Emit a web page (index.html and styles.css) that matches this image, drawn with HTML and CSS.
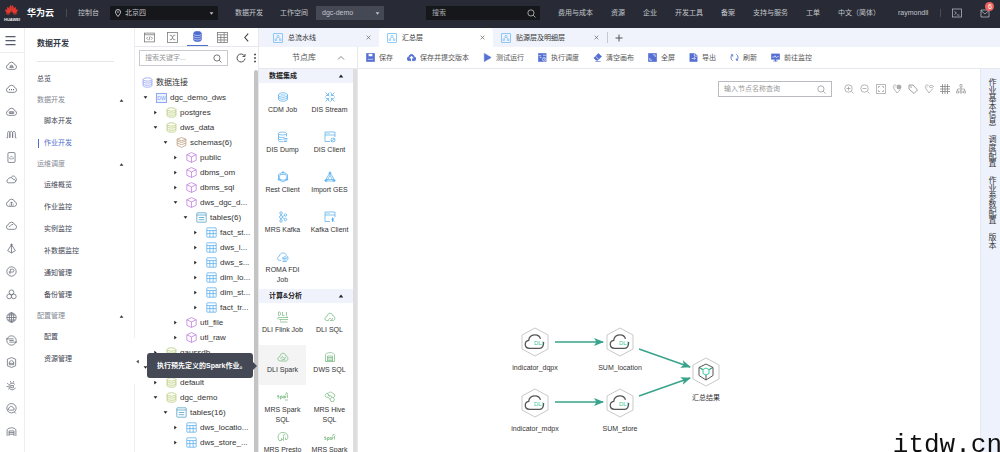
FILE: index.html
```html
<!DOCTYPE html>
<html lang="zh-CN">
<head>
<meta charset="utf-8">
<title>数据开发</title>
<link rel="stylesheet" href="styles.css">
</head>
<body>
<svg class="sprite" aria-hidden="true">
  <symbol id="down" viewBox="0 0 8 8"><path d="M1 2h6L4 6z" fill="currentColor" stroke="none"/></symbol>
  <symbol id="up" viewBox="0 0 8 8"><path d="M1 6h6L4 2z" fill="currentColor" stroke="none"/></symbol>
  <symbol id="right" viewBox="0 0 8 8"><path d="M2 1v6l4-3z" fill="currentColor" stroke="none"/></symbol>
  <symbol id="search" viewBox="0 0 16 16"><circle cx="7" cy="7" r="5.5"/><path d="M11 11l4 4"/></symbol>
  <symbol id="close" viewBox="0 0 8 8"><path d="M1 1l6 6M7 1L1 7"/></symbol>
  <symbol id="cloud" viewBox="0 0 20 20"><path d="M5 17a4.300 4.300 0 0 1-.8-8.500A6 6 0 0 1 15.800 8.500a4.300 4.300 0 0 1-.8 8.500z"/></symbol>
  <symbol id="cloud-in" viewBox="0 0 20 20"><use href="#cloud"/><path d="M6 13.500h8M7 11.500l3-2 3 2z"/></symbol>
  <symbol id="cloud-dots" viewBox="0 0 20 20"><use href="#cloud"/><path d="M5.500 12h1.800M9.100 12h1.800M12.700 12h1.800" stroke-width="2"/></symbol>
  <symbol id="cloud-bars" viewBox="0 0 20 20"><use href="#cloud"/><path d="M6 10.500h8v3H6zM8.700 10.500v3M11.400 10.500v3"/></symbol>
  <symbol id="waves" viewBox="0 0 20 20"><path d="M1 16h2V8c0-5 4-5 4 0v8V8c0-5 5-5 5 0v8V8c0-5 5-5 5 0v8h2"/></symbol>
  <symbol id="doc" viewBox="0 0 20 20"><rect x="3.500" y="1" width="13" height="18" rx="2"/><path d="M7 12.500a2 2 0 0 1 .5-3c1-2 4-2 5 0a2 2 0 0 1 .5 3z" stroke-width="1"/></symbol>
  <symbol id="cloud-two" viewBox="0 0 20 20"><path d="M4 16a3.400 3.400 0 0 1 0-6.500A5 5 0 0 1 13.400 10a3 3 0 0 1 1.600 6zM10 5c3-3 8-.5 8 3 2 1.500 1 4-.5 5"/></symbol>
  <symbol id="cloud-up" viewBox="0 0 20 20"><use href="#cloud"/><path d="M10 16V9M7.500 11.500L10 9l2.500 2.500M7 13.500v2M13 13.500v2"/></symbol>
  <symbol id="cloud-line" viewBox="0 0 20 20"><use href="#cloud"/><path d="M5 12c3 1 4-5 8-4"/></symbol>
  <symbol id="boat" viewBox="0 0 20 20"><path d="M10 1v17M10 3L3 14l7 4 7-4zM8 3h4"/></symbol>
  <symbol id="circle-p" viewBox="0 0 20 20"><circle cx="10" cy="10" r="8.500"/><path d="M7 15l1-9h4a2.500 2.500 0 0 1 0 5H8M5 11h3"/></symbol>
  <symbol id="trefoil" viewBox="0 0 20 20"><circle cx="10" cy="6" r="4.300"/><circle cx="5.800" cy="13.500" r="4.300"/><circle cx="14.200" cy="13.500" r="4.300"/></symbol>
  <symbol id="globe" viewBox="0 0 20 20"><circle cx="10" cy="10" r="8.500"/><ellipse cx="10" cy="10" rx="4" ry="8.500"/><path d="M1.500 10h17M3 5.500h14M3 14.500h14M10 1.500v17"/></symbol>
  <symbol id="circle-lines" viewBox="0 0 20 20"><circle cx="10" cy="10" r="8.500"/><path d="M0 7h14M6 10h8M6 13h14"/></symbol>
  <symbol id="hexdoc" viewBox="0 0 20 20"><path d="M10 1l7.500 3v12L10 19l-7.500-3V4zM6 14V9l4-3 4 3v5zM6 11.500h8"/></symbol>
  <symbol id="gear" viewBox="0 0 20 20"><path d="M16 8a6 6 0 1 0 1 6M8.500 10h5v4h-5zM8 2l1 3M2 6l3 2M1 12h3M14 2l-1 3M4 17l2-2"/></symbol>
  <symbol id="circle-cloud" viewBox="0 0 20 20"><circle cx="10" cy="9.500" r="8.500"/><path d="M6 13a2 2 0 0 1 0-4c1-4 6-4 7 0a2 2 0 0 1 0 4zM15 16l3 3"/></symbol>
  <symbol id="house" viewBox="0 0 20 20"><path d="M2 18V7c3-5 13-5 16 0v11M5.500 18V9h9v9M5.500 12h9M5.500 15h9"/></symbol>
  <symbol id="db" viewBox="0 0 20 20"><ellipse cx="10" cy="4.500" rx="8" ry="3"/><path d="M2 4.500v11c0 4 16 4 16 0v-11M2 8c0 4 16 4 16 0M2 12c0 4 16 4 16 0"/></symbol>
  <symbol id="dbfill" viewBox="0 0 20 20"><path d="M3 4c0-4 14-4 14 0v12c0 4-14 4-14 0z" fill="currentColor"/><path d="M3 6c2 3 12 3 14 0M3 10c2 3 12 3 14 0M3 14c2 3 12 3 14 0" stroke="#fff" stroke-width="1"/></symbol>
  <symbol id="cube" viewBox="0 0 20 20"><path d="M10 1l8.500 4v10L10 19l-8.500-4V5zM1.500 5L10 9l8.500-4M10 9v10"/></symbol>
  <symbol id="layers" viewBox="0 0 20 20"><path d="M10 1l8 3v3l-8 3-8-3V4zM2 4l8 3 8-3M2 7v4l8 3 8-3V7M2 11v4l8 4 8-4v-4"/></symbol>
  <symbol id="list" viewBox="0 0 20 20"><rect x="1.500" y="1.500" width="17" height="17" rx="1"/><path d="M1.500 5.500h17M5 10h10M5 14h10"/></symbol>
  <symbol id="grid" viewBox="0 0 20 20"><rect x="1.500" y="1.500" width="17" height="17" rx="1"/><path d="M1.500 6.500h17M1.500 12h17M7 6.500v12M13 6.500v12"/></symbol>
  <symbol id="code" viewBox="0 0 20 20"><rect x="1" y="2" width="18" height="16"/><path d="M1 5h18M7 9l-2.500 2.500L7 14M13 9l2.500 2.500L13 14M11 8l-2 7"/></symbol>
  <symbol id="flow" viewBox="0 0 20 20"><rect x="1" y="1" width="18" height="18"/><path d="M5 6h3l4 8h3M5 14h3l4-8h3"/></symbol>
  <symbol id="tabicon" viewBox="0 0 20 20"><rect x="1" y="1" width="18" height="18" rx="1"/><path d="M8 5h4v4H8zM4 12h3v3H4zM13 12h3v3h-3zM8 9l-2.500 3M12 9l2.500 3" stroke-width="1"/></symbol>
  <symbol id="dli" viewBox="0 0 28 20"><path d="M25 10c0 5-1 8-5 8H7c-7 0-7-9-1-10C7-1 19-1 21 6" stroke="#555" stroke-width="1.600"/></symbol>
</svg>

<header class="top">
  <a class="logo" href="#" aria-label="HUAWEI">
    <svg viewBox="0 0 32 32"><g fill="#e8392f" stroke="none"><path d="M15.500 19C9 13 10 5 15 2c1 4 1 11 .5 17zM16.500 19C23 13 22 5 17 2c-1 4-1 11-.5 17z"/><path d="M14 20C7 18 4 12 7 6c4 3 7 8 7 14zM18 20c7-2 10-8 7-14-4 3-7 8-7 14z"/><path d="M13 21.500C6 22 1 18 2 12c5 1 9 4 11 9.500zM19 21.500c7 .5 12-3.500 11-9.500-5 1-9 4-11 9.500z"/><path d="M12.500 23c-4 2.500-8 1-9.500-1.500 3-.5 6 0 9.500 1.500zM19.500 23c4 2.500 8 1 9.500-1.500-3-.5-6 0-9.500 1.500z"/></g></svg>
    <span>HUAWEI</span>
  </a>
  <b class="brand">华为云</b><i class="bar"></i>
  <a class="console" href="#">控制台</a>
  <label class="pick region"><svg class="i8" viewBox="0 0 16 16"><path d="M8 15C4 10 3 8.500 3 6a5 5 0 0 1 10 0c0 2.500-1 4-5 9z" stroke-width="2"/><circle cx="8" cy="6" r="1"/></svg><select aria-label="区域"><option>北京四</option></select><svg class="i5"><use href="#down"/></svg></label>
  <span class="crumb">数据开发</span><label class="crumb" for="space">工作空间</label>
  <div class="pick space"><select id="space"><option>dgc-demo</option></select><svg class="i5"><use href="#down"/></svg></div>
  <label class="pick find"><input type="text" placeholder="搜索" aria-label="搜索"><svg class="i9"><use href="#search"/></svg></label>
  <nav class="links"><a href="#">费用与成本</a><a href="#">资源</a><a href="#">企业</a><a href="#">开发工具</a><a href="#">备案</a><a href="#">支持与服务</a><a href="#">工单</a><a href="#">中文（简体）</a><a class="user" href="#">raymondll</a></nav>
  <i class="bar"></i>
  <button class="plain shell" aria-label="命令行"><svg class="i10" viewBox="0 0 20 20"><rect x="1" y="2" width="18" height="16"/><path d="M5 7l4 3-4 3M10 14h5"/></svg></button>
  <button class="plain mail" aria-label="消息"><svg class="i10" viewBox="0 0 20 20"><path d="M2 4h16v14H2zM2 5l8 7 8-7"/></svg><span class="badge">6</span></button>
</header>

<div class="body">
  <nav class="rail" aria-label="服务">
    <button class="plain burger" aria-label="菜单"><svg class="i11" viewBox="0 0 22 20"><path d="M1 2h20M1 10h20M1 18h20" stroke-width="2.500"/></svg></button>
    <div class="rail-list">
      <a href="#" aria-label="1"><svg><use href="#cloud-in"/></svg></a><a href="#" aria-label="2"><svg><use href="#cloud-dots"/></svg></a><a href="#" aria-label="3"><svg><use href="#cloud-bars"/></svg></a><a href="#" aria-label="4"><svg><use href="#waves"/></svg></a><a href="#" aria-label="5"><svg><use href="#doc"/></svg></a><a href="#" aria-label="6"><svg><use href="#cloud-two"/></svg></a><a href="#" aria-label="7"><svg><use href="#cloud-up"/></svg></a><a href="#" aria-label="8"><svg><use href="#cloud-line"/></svg></a><a href="#" aria-label="9"><svg><use href="#boat"/></svg></a><a href="#" aria-label="10"><svg><use href="#circle-p"/></svg></a><a href="#" aria-label="11"><svg><use href="#trefoil"/></svg></a><a href="#" aria-label="12"><svg><use href="#globe"/></svg></a><a href="#" aria-label="13"><svg><use href="#circle-lines"/></svg></a><a href="#" aria-label="14"><svg><use href="#hexdoc"/></svg></a><a href="#" aria-label="15"><svg><use href="#gear"/></svg></a><a href="#" aria-label="16"><svg><use href="#circle-cloud"/></svg></a><a href="#" aria-label="17"><svg><use href="#house"/></svg></a>
    </div>
  </nav>

  <nav class="side">
    <h1>数据开发</h1>
    <a href="#">总览</a>
    <button class="plain group">数据开发<svg class="i5"><use href="#up"/></svg></button>
    <a class="sub" href="#">脚本开发</a><a class="sub on" href="#">作业开发</a>
    <button class="plain group">运维调度<svg class="i5"><use href="#up"/></svg></button>
    <a class="sub" href="#">运维概览</a><a class="sub" href="#">作业监控</a><a class="sub" href="#">实例监控</a><a class="sub" href="#">补数据监控</a><a class="sub" href="#">通知管理</a><a class="sub" href="#">备份管理</a>
    <button class="plain group">配置管理<svg class="i5"><use href="#up"/></svg></button>
    <a class="sub" href="#">配置</a><a class="sub" href="#">资源管理</a>
    <button class="plain handle" aria-label="收起"><svg class="i5" viewBox="0 0 8 8"><path d="M6 1v6L2 4z" fill="currentColor" stroke="none"/></svg></button>
  </nav>

  <aside class="explorer">
    <div class="modes">
      <button class="plain" aria-label="脚本"><svg class="i11"><use href="#code"/></svg></button>
      <button class="plain" aria-label="作业"><svg class="i11"><use href="#flow"/></svg></button>
      <button class="plain active" aria-label="数据连接"><svg class="i11"><use href="#dbfill"/></svg></button>
      <button class="plain" aria-label="表"><svg class="i11" viewBox="0 0 20 20"><rect x="1" y="1" width="18" height="18"/><path d="M1 5h18M1 10h18M1 14.500h18M7 5v14M13 1v18"/></svg></button>
      <button class="plain back" aria-label="收起"><svg class="i9" viewBox="0 0 16 16"><path d="M11 1L5 8l6 7" stroke-width="2"/></svg></button>
    </div>
    <div class="filter">
      <label><input type="text" placeholder="搜索关键字..." aria-label="搜索关键字"><svg class="i9"><use href="#search"/></svg></label>
      <button class="plain" aria-label="刷新"><svg class="i10" viewBox="0 0 20 20"><path d="M17 6a8 8 0 1 0 1 5M18 2v5h-5" stroke-width="2"/></svg></button>
      <button class="plain more" aria-label="更多"><svg viewBox="0 0 4 20"><path d="M0 3h4M0 10h4M0 17h4" stroke-width="3"/></svg></button>
    </div>
    <div class="tree-wrap">
      <ul class="tree">
        <li class="l0"><svg class="ic blue"><use href="#db"/></svg>数据连接</li>
        <li class="l1"><svg class="ca"><use href="#down"/></svg><span class="dw">DW</span>dgc_demo_dws</li>
        <li class="l2"><svg class="ca"><use href="#right"/></svg><svg class="ic lime"><use href="#db"/></svg>postgres</li>
        <li class="l2"><svg class="ca"><use href="#down"/></svg><svg class="ic lime"><use href="#db"/></svg>dws_data</li>
        <li class="l3"><svg class="ca"><use href="#down"/></svg><svg class="ic tan"><use href="#layers"/></svg>schemas(6)</li>
        <li class="l4"><svg class="ca"><use href="#right"/></svg><svg class="ic violet"><use href="#cube"/></svg>public</li>
        <li class="l4"><svg class="ca"><use href="#right"/></svg><svg class="ic violet"><use href="#cube"/></svg>dbms_om</li>
        <li class="l4"><svg class="ca"><use href="#right"/></svg><svg class="ic violet"><use href="#cube"/></svg>dbms_sql</li>
        <li class="l4"><svg class="ca"><use href="#down"/></svg><svg class="ic violet"><use href="#cube"/></svg>dws_dgc_d...</li>
        <li class="l5"><svg class="ca"><use href="#down"/></svg><svg class="ic teal"><use href="#list"/></svg>tables(6)</li>
        <li class="l6"><svg class="ca"><use href="#right"/></svg><svg class="ic sky"><use href="#grid"/></svg>fact_st...</li>
        <li class="l6"><svg class="ca"><use href="#right"/></svg><svg class="ic sky"><use href="#grid"/></svg>dws_l...</li>
        <li class="l6"><svg class="ca"><use href="#right"/></svg><svg class="ic sky"><use href="#grid"/></svg>dws_s...</li>
        <li class="l6"><svg class="ca"><use href="#right"/></svg><svg class="ic sky"><use href="#grid"/></svg>dim_lo...</li>
        <li class="l6"><svg class="ca"><use href="#right"/></svg><svg class="ic sky"><use href="#grid"/></svg>dim_st...</li>
        <li class="l6"><svg class="ca"><use href="#right"/></svg><svg class="ic sky"><use href="#grid"/></svg>fact_tr...</li>
        <li class="l4"><svg class="ca"><use href="#right"/></svg><svg class="ic violet"><use href="#cube"/></svg>utl_file</li>
        <li class="l4"><svg class="ca"><use href="#right"/></svg><svg class="ic violet"><use href="#cube"/></svg>utl_raw</li>
        <li class="l2"><svg class="ca"><use href="#right"/></svg><svg class="ic lime"><use href="#db"/></svg>gaussdb</li>
        <li class="l1"><svg class="ca"><use href="#down"/></svg></li>
        <li class="l2"><svg class="ca"><use href="#right"/></svg><svg class="ic lime"><use href="#db"/></svg>default</li>
        <li class="l2"><svg class="ca"><use href="#down"/></svg><svg class="ic lime"><use href="#db"/></svg>dgc_demo</li>
        <li class="l3"><svg class="ca"><use href="#down"/></svg><svg class="ic teal"><use href="#list"/></svg>tables(16)</li>
        <li class="l4"><svg class="ca"><use href="#right"/></svg><svg class="ic sky"><use href="#grid"/></svg>dws_locatio...</li>
        <li class="l4"><svg class="ca"><use href="#right"/></svg><svg class="ic sky"><use href="#grid"/></svg>dws_store_...</li>
      </ul>
      <div class="thumb"></div>
    </div>
    <div class="tip" role="tooltip">执行预先定义的Spark作业。</div>
  </aside>

  <main>
    <div class="tabs">
      <div class="tab"><svg class="i10 tabic"><use href="#tabicon"/></svg><span>总流水线</span><button class="plain" aria-label="关闭"><svg class="i5"><use href="#close"/></svg></button></div>
      <div class="tab current"><svg class="i10 tabic"><use href="#tabicon"/></svg><span>汇总层</span><button class="plain" aria-label="关闭"><svg class="i5"><use href="#close"/></svg></button></div>
      <div class="tab"><svg class="i10 tabic"><use href="#tabicon"/></svg><span>贴源层及明细层</span><button class="plain" aria-label="关闭"><svg class="i5"><use href="#close"/></svg></button></div>
      <button class="plain add" aria-label="新建"><svg class="i8" viewBox="0 0 16 16"><path d="M8 1v14M1 8h14" stroke-width="2"/></svg></button>
    </div>
    <div class="work">
      <section class="lib">
        <button class="plain lib-head"><span>节点库</span><svg class="i8" viewBox="0 0 16 16"><path d="M2 11l6-6 6 6"/></svg></button>
        <div class="lib-scroll">
        <div class="lib-list">
          <h2>数据集成<svg class="i6"><use href="#up"/></svg></h2>
          <div class="cells sky">
            <div><svg viewBox="0 0 24 24"><path d="M3 8c0-6 18-6 18 0s-18 6-18 0zM3 8v4c0 6 18 6 18 0V8M3 12v4c0 6 18 6 18 0v-4M7 8h10"/></svg>CDM Job</div>
            <div><svg viewBox="0 0 24 24"><path d="M3 3l6 6V4M9 9H4M21 3l-6 6V4M15 9h5M3 21l6-6v5M9 15H4M21 21l-6-6v5M15 15h5M12 2v2M12 20v2M2 12h2M20 12h2M11 12h2"/></svg>DIS Stream</div>
            <div><svg viewBox="0 0 24 24"><ellipse cx="11" cy="5" rx="8" ry="3"/><path d="M3 5v14c1 3 8 3 10 2M19 5v6M3 10c0 4 10 4 12 2M3 15c0 2 5 3 8 2M13 15h8M13 18h8M14 21h6"/></svg>DIS Dump</div>
            <div><svg viewBox="0 0 24 24"><path d="M12 21H2V2h20v10M2 8h20M5 5h2M9 5h2"/><circle cx="18" cy="18" r="4"/><path d="M14 21l8-6"/></svg>DIS Client</div>
            <div><svg viewBox="0 0 24 24"><path d="M12 2l9 5v10l-9 5-9-5V7zM7 7h10l3 5-3 6H7l-3-6z"/><circle cx="12" cy="3" r="1.500"/><circle cx="4" cy="17" r="1.500"/><circle cx="20" cy="17" r="1.500"/></svg>Rest Client</div>
            <div><svg viewBox="0 0 24 24"><path d="M12 3L2 20h20zM12 9l-5 8h10zM12 3v6M3 19l4-2M21 19l-4-2"/><circle cx="12" cy="4" r="2"/><circle cx="4" cy="19" r="2"/><circle cx="20" cy="19" r="2"/></svg>Import GES</div>
            <div><svg viewBox="0 0 24 24"><circle cx="8" cy="4" r="2.500"/><circle cx="8" cy="12" r="3"/><circle cx="8" cy="20" r="2.500"/><circle cx="17" cy="8" r="2.500"/><circle cx="17" cy="17" r="2.500"/><path d="M8 6v3M8 15v3M11 11l4-2M11 13l4 3"/></svg>MRS Kafka</div>
            <div><svg viewBox="0 0 24 24"><path d="M12 21H2V2h20v10M2 8h20M5 5h2M9 5h2M17 13v9M17 17l4-3M17 18l4 3"/><circle cx="17" cy="17" r="1.500"/></svg>Kafka Client</div>
            <div><svg viewBox="0 0 24 24"><path d="M8 19H6C0 19 0 11 5 10 6 2 17 2 19 9c4 2 4 8 0 11M10 14l6-3 5 3M11 15h8M11 18h8M11 21h8"/></svg>ROMA FDI Job</div>
          </div>
          <h2>计算&amp;分析<svg class="i6"><use href="#up"/></svg></h2>
          <div class="cells green">
            <div><svg viewBox="0 0 24 24"><path d="M3 2v7h2c3 0 3-7 0-7zM11 2v7h4M19 2v7M2 13h20l-3-2M22 17H5l3 2M2 13v4M6 22h15"/></svg>DLI Flink Job</div>
            <div><svg viewBox="0 0 24 24"><path d="M9 19H6c-6 0-5-8 0-8C7 2 17 3 18 10c5 0 5 9 0 9h-6M9 19c0-5 5-5 6-2M17 14v3"/></svg>DLI SQL</div>
            <div class="hover"><svg viewBox="0 0 24 24"><path d="M6 20c-6 0-5-9 0-9C7 2 17 3 18 10c5 0 5 10 0 10zM7 16l4-5 3 4 4-3M9 18l8-2"/></svg>DLI Spark</div>
            <div><svg viewBox="0 0 24 24"><path d="M3 21V7c4-5 14-5 18 0v14zM7 21V10h10v11M7 13h10M7 16h10M7 19h10"/></svg>DWS SQL</div>
            <div><svg viewBox="0 0 24 24"><path d="M1 14h3v-3H1V9h3M7 17V10h3v4H7M15 14h-3v-4h3v4M17 14v-4h2M21 7v7M17 8l2-5 3 3M16 18h6"/></svg>MRS Spark SQL</div>
            <div><svg viewBox="0 0 24 24"><path d="M4 12C0 9 4 3 8 5c2-4 9-3 10 0 5 1 4 8 0 8M4 12l5 1 3 4M8 8l8 3M12 17l4-5 5 4-2 5h-5zM7 5l4 6"/></svg>MRS Hive SQL</div>
            <div><svg viewBox="0 0 24 24"><path d="M4 19C-1 10 5 2 12 3c9 0 12 8 8 14h-3v-4M4 19h5v-4l4 4v-8c-2-3 2-6 4-3"/></svg>MRS Presto</div>
            <div><svg viewBox="0 0 24 24"><path d="M1 17h3v-3H1v-2h3M7 20v-7h3v4H7M15 17h-3v-4h3v4M17 17v-4h2M21 10v7M17 11l2-5 3 3"/></svg>MRS Spark</div>
          </div>
        </div>
        <div class="lib-bar"></div>
        </div>
      </section>

      <section class="editor">
        <div class="tools">
          <button class="plain"><svg viewBox="0 0 20 20"><path d="M1 1h18v18H1z" fill="currentColor"/><path d="M5 1h10v7H5z" fill="#fff"/><path d="M12 3v3M4 14h12" stroke="#fff"/></svg>保存</button>
          <button class="plain"><svg viewBox="0 0 20 20"><path d="M4 17a4 4 0 0 1 0-8c1-8 11-8 12 0a4 4 0 0 1 0 8z" fill="currentColor"/><path d="M10 18V9M6 12l4-4 4 4" stroke="#fff" stroke-width="2.500"/></svg>保存并提交版本</button>
          <button class="plain"><svg viewBox="0 0 20 20"><path d="M3 1l15 9-15 9z" fill="currentColor"/></svg>测试运行</button>
          <button class="plain"><svg viewBox="0 0 20 20"><path d="M1 1h17v18H1z" fill="currentColor"/><path d="M1 6h6M11 5h7M4 10h4" stroke="#fff"/><circle cx="14" cy="14" r="4" fill="currentColor" stroke="#fff"/><path d="M14 12v2h2" stroke="#fff"/></svg>执行调度</button>
          <button class="plain"><svg viewBox="0 0 20 20"><path d="M12 1l7 7-8 8H7L2 11z" fill="currentColor"/><path d="M5 19h12"/><path d="M6 8l7 6" stroke="#fff"/></svg>清空画布</button>
          <button class="plain"><svg viewBox="0 0 20 20"><path d="M1 1h18v18H1z" fill="currentColor"/><path d="M11 4h5v5M4 11v5h5" stroke="#fff"/></svg>全屏</button>
          <button class="plain"><svg viewBox="0 0 20 20"><path d="M2 1h11l5 5v13H2z" fill="currentColor"/><path d="M12 1v6h6M6 12h8M11 9l3 3-3 3" stroke="#fff"/></svg>导出</button>
          <button class="plain"><svg viewBox="0 0 20 20"><path d="M6 17A8 8 0 0 1 5 4M14 3a8 8 0 0 1 1 13M2 4h4v4M18 16h-4v-4" stroke-width="2"/></svg>刷新</button>
          <button class="plain"><svg viewBox="0 0 20 20"><path d="M1 2h18v12H1zM9 14h2v4H9zM5 18h10" fill="currentColor"/><path d="M3 9h4l2-3 3 5 2-3h3" stroke="#fff"/></svg>前往监控</button>
        </div>
        <div class="stage">
          <div class="canvas">
            <svg class="edges" viewBox="0 0 220 110"><defs><marker id="head" markerUnits="userSpaceOnUse" markerWidth="10" markerHeight="8" refX="9" refY="4" orient="auto"><path d="M0 0l10 4-10 4 2.500-4z" fill="#36a38a" stroke="none"/></marker></defs><path d="M45 22H93"/><path d="M45 82H93"/><path d="M129 29l51 18"/><path d="M129 76l51-18"/></svg>
            <div class="node n1"><svg viewBox="0 0 28 30"><path class="hex" d="M14 1l13 7v14l-13 7-13-7V8z"/><use href="#dli" x="3" y="7" width="22" height="16"/><text x="13" y="18">DLI</text></svg>indicator_dqpx</div>
            <div class="node n2"><svg viewBox="0 0 28 30"><path class="hex" d="M14 1l13 7v14l-13 7-13-7V8z"/><use href="#dli" x="3" y="7" width="22" height="16"/><text x="13" y="18">DLI</text></svg>SUM_location</div>
            <div class="node n3"><svg viewBox="0 0 28 30"><path class="hex" d="M14 1l13 7v14l-13 7-13-7V8z"/><use href="#dli" x="3" y="7" width="22" height="16"/><text x="13" y="18">DLI</text></svg>indicator_mdpx</div>
            <div class="node n4"><svg viewBox="0 0 28 30"><path class="hex" d="M14 1l13 7v14l-13 7-13-7V8z"/><use href="#dli" x="3" y="7" width="22" height="16"/><text x="13" y="18">DLI</text></svg>SUM_store</div>
            <div class="node n5"><svg viewBox="0 0 28 30"><path class="hex" d="M14 1l13 7v14l-13 7-13-7V8z"/><path d="M14 7l7 3.500v8L14 23l-7-4.500v-8zM7 10.500l4 2M21 10.500l-4 2M14 18v5" stroke="#555"/><path d="M14 11l3 1.500v4L14 18l-3-1.500v-4zM8 11l3 2M20 11l-3 2" stroke="#3cc8a0"/></svg>汇总结果</div>
            <div class="stage-tools">
              <label><input type="text" placeholder="输入节点名称查询" aria-label="输入节点名称查询"><svg class="i9"><use href="#search"/></svg></label>
              <button class="plain" aria-label="放大"><svg viewBox="0 0 20 20"><circle cx="9" cy="9" r="7.500"/><path d="M15 15l4 4M5 9h8M9 5v8"/></svg></button>
              <button class="plain" aria-label="缩小"><svg viewBox="0 0 20 20"><circle cx="9" cy="9" r="7.500"/><path d="M15 15l4 4M5 9h8"/></svg></button>
              <button class="plain" aria-label="适应"><svg viewBox="0 0 20 20"><path d="M1 1h18v18H1zM5 8V5h3M12 5h3v3M15 12v3h-3M8 15H5v-3"/></svg></button>
              <button class="plain" aria-label="显示标签"><svg viewBox="0 0 20 20"><path d="M9 3C5 0 1 4 3 8l7 10 7-7M5 6h2"/><circle cx="14" cy="6" r="4" fill="#aaa"/></svg></button>
              <button class="plain" aria-label="标签"><svg viewBox="0 0 20 20"><path d="M2 2h8l9 10-7 7L2 10z" stroke="#777"/><circle cx="6" cy="6" r="1"/></svg></button>
              <button class="plain" aria-label="隐藏标签"><svg viewBox="0 0 20 20"><path d="M9 3C5 0 1 4 3 8l7 10 8-9M5 6h2M10 5c3-3 6-3 9 0-3 3-6 3-9 0z"/></svg></button>
              <button class="plain" aria-label="网格"><svg viewBox="0 0 20 20"><path d="M5 0v20M10 0v20M15 0v20M0 5h20M0 10h20M0 15h20" stroke="#777"/></svg></button>
              <button class="plain" aria-label="布局"><svg viewBox="0 0 20 20"><path d="M8 1h4v5H8zM1 14h4v4H1zM8 14h4v4H8zM15 14h4v4h-4zM10 6v8M3 14v-4h14v4"/></svg></button>
            </div>
          </div>
          <nav class="props"><a href="#">作业基本信息</a><a href="#">调度配置</a><a href="#">作业参数配置</a><a href="#">版本</a></nav>
        </div>
      </section>
    </div>
  </main>
</div>
<div class="mark">itdw.cn</div>
</body>
</html>
```
FILE: styles.css
```css
* { box-sizing: border-box; }
body {
  margin: 0;
  height: 100vh;
  display: flex;
  flex-direction: column;
  overflow: hidden;
  background: #fff;
  color: #333;
  font: 7px/10px "Liberation Sans", "Noto Sans CJK SC", sans-serif;
}
a { color: inherit; text-decoration: none; }
svg { fill: none; stroke: currentColor; stroke-width: 1.4px; display: block; flex: none; }
.sprite { position: absolute; width: 0; height: 0; }
.plain {
  border: 0; padding: 0; background: none; color: inherit; font: inherit;
  display: flex; align-items: center; flex: none;
}
input, select {
  border: 0; padding: 0; margin: 0; outline: 0; background: none; color: inherit;
  font: inherit; appearance: none; flex: 1; min-width: 0;
}
.i5 { width: 5px; height: 5px; }
.i6 { width: 6px; height: 6px; }
.i8 { width: 8px; height: 8px; }
.i9 { width: 9px; height: 9px; }
.i10 { width: 10px; height: 10px; }
.i11 { width: 11px; height: 11px; }

/* top bar */
.top {
  flex: none; height: 28px; padding: 0 14px 2px 4px;
  display: flex; align-items: center; white-space: nowrap;
  background: #282b35; color: #c3c5cb;
}
.top > * { flex: none; }
.logo { width: 15px; color: #eee; font-size: 4px; line-height: 4px; font-weight: bold; }
.logo svg { width: 15px; height: 14px; }
.brand { margin-left: 8px; color: #fff; font-size: 9px; }
.bar { width: 1px; height: 8px; background: #4a4d57; margin: 0 11px 0 12px; }
.pick { display: flex; align-items: center; gap: 3px; height: 14px; padding: 0 4px; background: #16171a; }
.region { width: 108px; margin: 0 17px 0 11px; }
.crumb { margin-right: 17px; }
.crumb + .crumb { margin-right: 8px; }
.space { width: 68px; padding-left: 6px; background: #454955; }
.find { width: 114px; margin-left: 42px; padding-left: 6px; }
.find input::placeholder { color: #a5a7ad; }
.top .links { flex: 1; display: flex; gap: 18px; margin-left: 18px; }
.mail { position: relative; margin-left: 18px; }
.badge {
  position: absolute; left: 5px; top: -6px; width: 9px; height: 9px;
  border-radius: 5px; background: #f0645f; color: #fff; line-height: 9px; text-align: center;
}

.body { flex: 1; min-height: 0; display: flex; }

/* service rail */
.rail { width: 25px; flex: none; border-right: 1px solid #eceef2; display: flex; flex-direction: column; padding-bottom: 15px; }
.burger { height: 25px; padding-left: 5px; border-bottom: 1px solid #eee; color: #555b6b; }
.rail-list { flex: 1; display: flex; flex-direction: column; justify-content: space-between; padding: 7px 0 0 6px; color: #666b76; }
.rail-list svg { width: 11px; height: 11px; }

/* section menu */
.side { position: relative; width: 110px; flex: none; border-right: 1px solid #eceef2; padding: 6px 10px 0 12px; color: #424654; }
.side h1 { margin: 0 10px 6px 0; padding-bottom: 7px; border-bottom: 1px solid #e4e5e8; font-size: 8px; line-height: 20px; color: #333846; }
.side > a { display: block; line-height: 22px; }
.side .group { width: 100%; height: 20px; line-height: 20px; justify-content: space-between; color: #858994; }
.group svg { color: #333; }
.side .sub { padding-left: 7px; }
.side .on { color: #526ecc; background: linear-gradient(#526ecc, #526ecc) 1px center / 1px 9px no-repeat; }
.handle { position: absolute; z-index: 2; right: -7px; top: 310px; width: 8px; height: 46px; padding-left: 2px; background: #fff; border-radius: 0 3px 3px 0; }

/* data explorer */
.explorer { position: relative; width: 124px; flex: none; display: flex; flex-direction: column; border-right: 1px solid #e6e8ee; }
.modes { height: 19px; flex: none; display: flex; border-bottom: 1px solid #e6e8ee; color: #777; }
.modes .plain { width: 25px; padding: 0 3px 0 9px; }
.modes .plain + .plain { padding: 0 7px; }
.modes .active { color: #4d6bd0; width: 21px; margin: 0 2px; border-bottom: 1px solid #526ecc; }
.modes .plain.active { padding: 0 5px; }
.modes .back { color: #444; margin-left: auto; }
.filter { height: 22px; flex: none; display: flex; align-items: center; gap: 8px; padding: 0 2px 0 4px; color: #555; }
.filter label { flex: 1; min-width: 0; height: 16px; border: 1px solid #c8cad0; display: flex; align-items: center; padding: 0 5px; }
.filter input::placeholder, .stage-tools input::placeholder { color: #999; }
.filter .more svg { width: 2px; height: 10px; }
.tree-wrap { flex: 1; min-height: 0; display: flex; overflow: hidden; }
.tree { flex: 1; min-width: 0; margin: 0; padding: 6px 0 0 7px; list-style: none; font-size: 8px; color: #333; overflow: hidden; }
.tree li { height: 15px; display: flex; align-items: center; gap: 3px; white-space: nowrap; }
.ca { width: 5px; height: 5px; margin-right: 5px; color: #222; }
.ic { width: 11px; height: 11px; }
.l1 { padding-left: 1px; }
.l2 { padding-left: 11px; }
.l3 { padding-left: 21px; }
.l4 { padding-left: 31px; }
.l5 { padding-left: 41px; }
.l6 { padding-left: 51px; }
.blue { color: #8b9cf0; }
.lime { color: #b3c872; }
.tan { color: #b99b7c; }
.violet { color: #c07be0; }
.teal { color: #4d9fc4; }
.sky { color: #58aef0; }
.dw { width: 11px; height: 10px; border: 1px solid #8faaf5; background: #edf2ff; color: #7d9df5; font-size: 5px; line-height: 8px; text-align: center; }
.thumb { width: 4px; flex: none; margin-top: 1px; background: #c4c4c4; border-radius: 2px 2px 0 0; }
.tip {
  position: absolute; z-index: 3; left: 12px; top: 325px; width: 106px; height: 25px; padding-left: 10px;
  background: #454955; border-radius: 3px; color: #fff; font-weight: bold; line-height: 25px; white-space: nowrap;
}
.tip::after { content: ""; position: absolute; left: 100%; top: 9px; border: 4px solid transparent; border-left-color: #454955; border-right: 0; }

/* work area */
main { flex: 1; min-width: 0; display: flex; flex-direction: column; }
.tabs { height: 19px; flex: none; display: flex; background: #f0f3fc; color: #333; }
.tab { width: 114px; display: flex; align-items: center; gap: 5px; padding: 0 8px; margin-left: 6px; }
.tab + .tab { margin-left: 0; }
.tab span { flex: 1; }
.tab button { color: #555; }
.tab button svg { stroke-width: 1px; }
.current { background: #fff; border-radius: 4px 4px 0 0; }
.tabic { color: #5fb4f2; }
.add { height: 11px; align-self: center; padding-left: 7px; border-left: 1px solid #c5c8d0; color: #555; }
.work { flex: 1; min-height: 0; display: flex; }

.lib { width: 99px; flex: none; display: flex; flex-direction: column; border-right: 1px solid #e6e8ee; }
.lib-head { height: 22px; padding: 0 12px 0 33px; border-bottom: 1px solid #e6e8ee; justify-content: space-between; font-size: 8px; color: #555; }
.lib-scroll { flex: 1; min-height: 0; display: flex; overflow: hidden; }
.lib-list { flex: 1; }
.lib-bar { width: 4px; background: #dedede; }
.lib h2 { margin: 0; height: 14px; padding: 0 9px 0 10px; display: flex; align-items: center; justify-content: space-between; background: #f0f3fc; font-size: 7px; color: #222; }
.cells { display: grid; grid-template-columns: 1fr 1fr; grid-auto-rows: 40px; padding: 2px 0 4px; }
.cells > div { padding: 6px 2px 0; color: #333; text-align: center; }
.cells svg { width: 12px; height: 12px; margin: 0 auto 2px; }
.sky svg { color: #4ea9ee; }
.green svg { color: #73b77c; }
.hover { background: #f4f4f5; }

.editor { flex: 1; min-width: 0; display: flex; flex-direction: column; }
.tools { height: 22px; flex: none; display: flex; gap: 14px; padding-left: 8px; border-bottom: 1px solid #e6e8ee; color: #555; white-space: nowrap; }
.tools button { gap: 4px; }
.tools svg { width: 9px; height: 9px; color: #5570d2; }
.stage { flex: 1; min-height: 0; display: flex; }
.canvas { position: relative; flex: 1; }
.stage-tools { display: flex; align-items: center; justify-content: flex-end; gap: 6px; padding: 12px 14px 0 0; color: #999; }
.stage-tools label { width: 114px; height: 16px; margin-right: 6px; border: 1px solid #b9bbc0; display: flex; align-items: center; padding: 0 5px; }
.stage-tools button svg { width: 10px; height: 10px; }
.props { width: 20px; flex: none; padding-top: 9px; background: #eef2fd; border-left: 1px solid #e4e8f4; writing-mode: vertical-rl; display: flex; gap: 9px; font-size: 8px; line-height: 18px; color: #333; white-space: nowrap; }

/* job graph */
.edges { position: absolute; left: 152px; top: 251px; width: 220px; height: 110px; stroke: #36a38a; }
.edges > path { marker-end: url(#head); }
.node { position: absolute; width: 70px; text-align: center; color: #333; }
.node svg { width: 28px; height: 30px; margin: 0 auto 6px; stroke-width: 1px; }
.hex { fill: #fff; stroke: #c9c9c9; }
.node text { fill: #3cc8a0; stroke: none; font-size: 6px; }
.n1 { left: 142px; top: 258px; }
.n2 { left: 227px; top: 258px; }
.n3 { left: 142px; top: 319px; }
.n4 { left: 227px; top: 319px; }
.n5 { left: 313px; top: 288px; }

.mark { position: fixed; z-index: 4; right: -2px; bottom: -8px; color: #111; font: 26px/30px "Liberation Mono", monospace; }
```
